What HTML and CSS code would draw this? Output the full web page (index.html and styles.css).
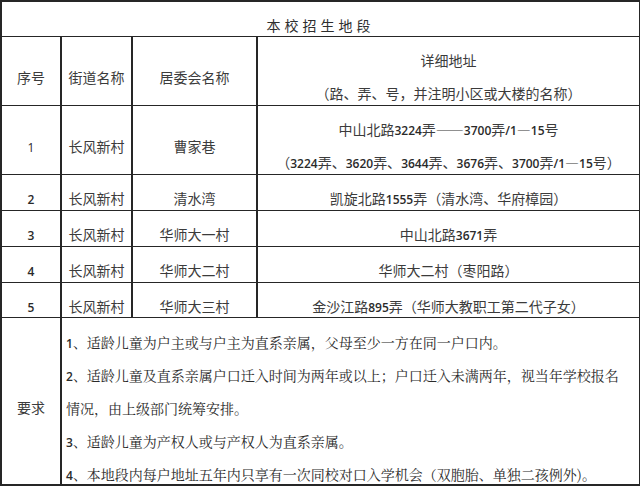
FILE: index.html
```html
<!DOCTYPE html>
<html lang="zh-CN">
<head>
<meta charset="utf-8">
<title>本校招生地段</title>
<link rel="stylesheet" href="styles.css">
</head>
<body>
<table class="sheet">
  <colgroup>
    <col class="c1"><col class="c2"><col class="c3"><col class="c4">
  </colgroup>
  <tr class="r-title">
    <td colspan="4" class="title">本校招生地段</td>
  </tr>
  <tr class="r-tall">
    <td>序号</td>
    <td>街道名称</td>
    <td>居委会名称</td>
    <td><div class="ln">详细地址</div><div class="ln gap">（路、弄、号，并注明小区或大楼的名称）</div></td>
  </tr>
  <tr class="r-tall">
    <td><span class="n light">1</span></td>
    <td>长风新村</td>
    <td>曹家巷</td>
    <td><div class="ln">中山北路<b class="n">3224</b>弄——<b class="n">3700</b>弄<b class="n">/1</b>—<b class="n">15</b>号</div><div class="ln gap">（<b class="n">3224</b>弄、<b class="n">3620</b>弄、<b class="n">3644</b>弄、<b class="n">3676</b>弄、<b class="n">3700</b>弄<b class="n">/1</b>—<b class="n">15</b>号）</div></td>
  </tr>
  <tr class="r-2">
    <td><b class="n">2</b></td>
    <td>长风新村</td>
    <td>清水湾</td>
    <td>凯旋北路<b class="n">1555</b>弄（清水湾、华府樟园）</td>
  </tr>
  <tr class="r-3">
    <td><b class="n">3</b></td>
    <td>长风新村</td>
    <td>华师大一村</td>
    <td>中山北路<b class="n">3671</b>弄</td>
  </tr>
  <tr class="r-4">
    <td><b class="n">4</b></td>
    <td>长风新村</td>
    <td>华师大二村</td>
    <td>华师大二村（枣阳路）</td>
  </tr>
  <tr class="r-5">
    <td><b class="n">5</b></td>
    <td>长风新村</td>
    <td>华师大三村</td>
    <td>金沙江路<b class="n">895</b>弄（华师大教职工第二代子女）</td>
  </tr>
  <tr class="r-req">
    <td>要求</td>
    <td colspan="3" class="req">
      <div class="rl"><b class="n">1</b>、适龄儿童为户主或与户主为直系亲属，父母至少一方在同一户口内。</div>
      <div class="rl"><b class="n">2</b>、适龄儿童及直系亲属户口迁入时间为两年或以上；户口迁入未满两年，视当年学校报名</div>
      <div class="rl">情况，由上级部门统筹安排。</div>
      <div class="rl"><b class="n">3</b>、适龄儿童为产权人或与产权人为直系亲属。</div>
      <div class="rl"><b class="n">4</b>、本地段内每户地址五年内只享有一次同校对口入学机会（双胞胎、单独二孩例外)。</div>
    </td>
  </tr>
</table>
</body>
</html>
```
FILE: styles.css
```css
html, body {
  margin: 0;
  padding: 0;
  background: #ffffff;
}

body {
  width: 640px;
  height: 493px;
  overflow: hidden;
  font-family: "Noto Sans CJK SC", "Noto Sans", sans-serif;
  font-size: 14px;
  color: #3b3b3b;
}

.sheet {
  border-collapse: collapse;
  table-layout: fixed;
  width: 639px;
  margin: 0;
}

.c1 { width: 60px; }
.c2 { width: 71px; }
.c3 { width: 125px; }
.c4 { width: 383px; }

.sheet td {
  border-top: 1px solid #262626;
  border-bottom: 1px solid #262626;
  border-left: 2px solid #262626;
  border-right: 2px solid #262626;
  text-align: center;
  vertical-align: middle;
  padding: 12px 0 0 0;
  line-height: 20px;
  white-space: nowrap;
  overflow: hidden;
}

.sheet .r-title td {
  border-top-width: 2px;
}

.sheet .r-req td {
  border-bottom-width: 2px;
}

.r-title { height: 35px; }
.r-tall { height: 69px; }
.r-2 { height: 36px; }
.r-3 { height: 36px; }
.r-4 { height: 36px; }
.r-5 { height: 35px; }
.r-req { height: 168px; }

.title {
  letter-spacing: 4px;
  color: #2e2e2e;
}

.ln {
  height: 20px;
}

.ln.gap {
  margin-top: 13px;
}

.n {
  font-family: "Open Sans", "Liberation Sans", sans-serif;
  font-weight: 600;
  font-size: 12px;
  line-height: 1;
  color: #2a2a2a;
}

.n.light {
  font-weight: 400;
}

.sheet td.req {
  text-align: left;
  padding: 14px 0 0 4px;
  vertical-align: top;
  font-family: "Noto Serif CJK SC", "Noto Sans CJK SC", serif;
  color: #2a2a2a;
}

.rl {
  height: 20px;
  line-height: 20px;
}

.rl + .rl {
  margin-top: 13px;
}
```
